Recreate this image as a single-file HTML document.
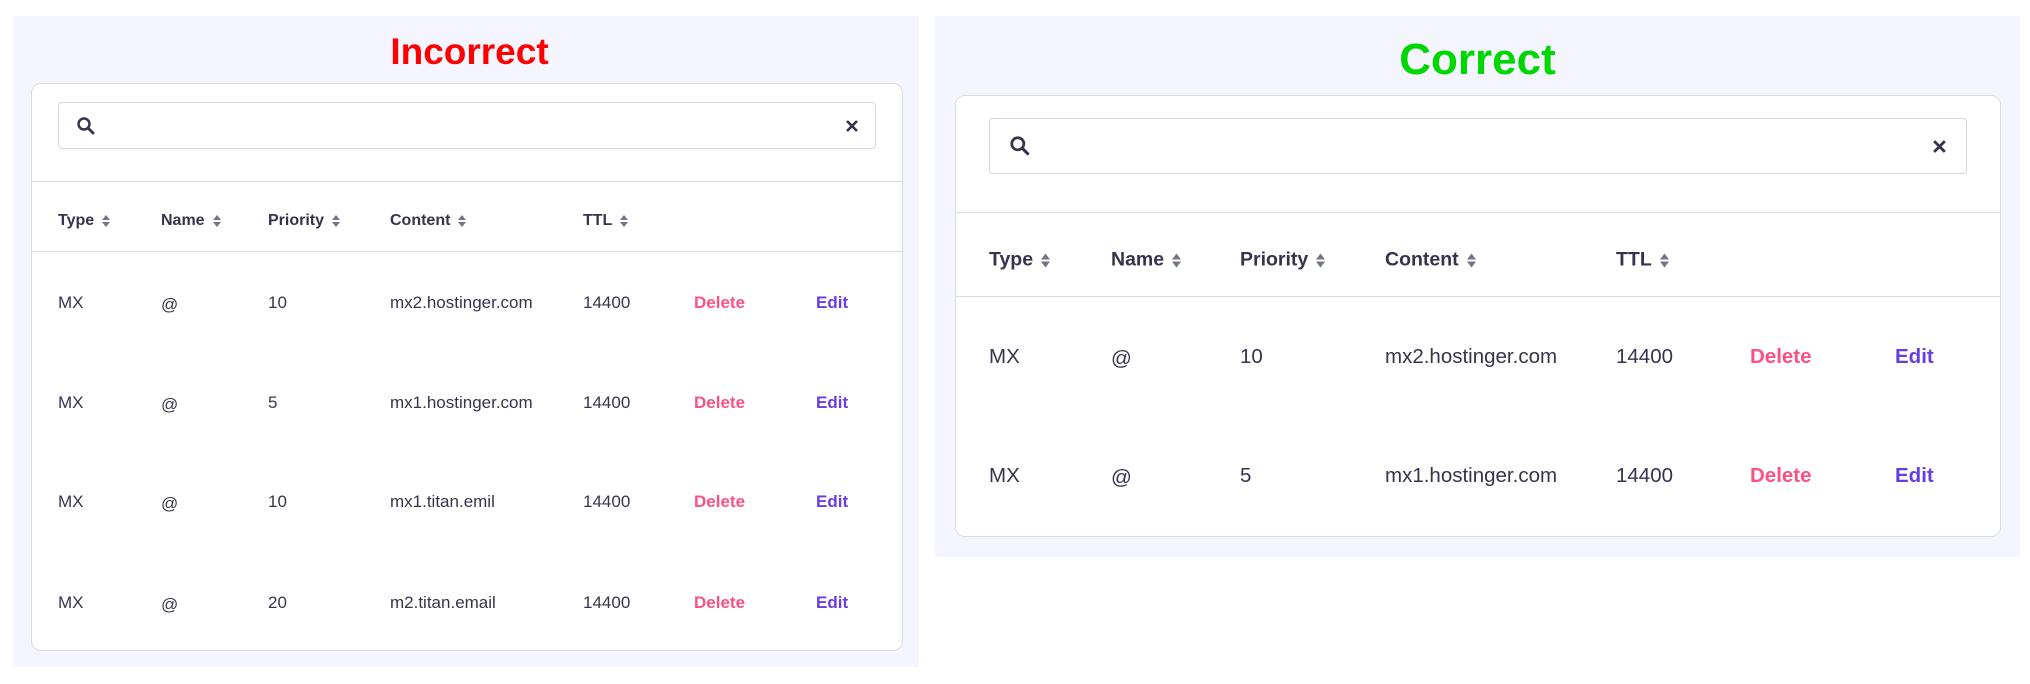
<!DOCTYPE html>
<html><head><meta charset="utf-8"><style>
body{margin:0;width:2030px;height:684px;background:#fff;position:relative;font-family:"Liberation Sans",sans-serif;color:#36344d;overflow:hidden}
.a{position:absolute}
.panel{position:absolute;background:#f4f5ff}
.card{position:absolute;background:#fff;border:1px solid #dadce0;border-radius:10px;box-sizing:border-box}
.search{position:absolute;border:1px solid #d5d7dd;border-radius:4px;box-sizing:border-box;background:#fff}
.hr{position:absolute;height:1px;background:#dadce0}
.t{position:absolute;white-space:nowrap;transform:translateY(-50%)}
.h{font-weight:bold}
.del{color:#fc5185;font-weight:bold}
.ed{color:#673de6;font-weight:bold}
.s{display:inline-block;vertical-align:middle;margin-left:8px}
</style></head><body>
<div class="panel" style="left:13px;top:16px;width:906px;height:651px"></div>
<div class="t" style="left:0;width:939px;text-align:center;top:52px;color:#f00;font-weight:bold;font-size:37px">Incorrect</div>
<div class="card" style="left:31px;top:83px;width:872px;height:568px"></div>
<div class="search" style="left:58px;top:102px;width:818px;height:47px"></div>
<svg class="a" style="left:76px;top:116px" width="20" height="20" viewBox="0 0 20 20"><circle cx="8" cy="8" r="5.5" fill="none" stroke="#36344d" stroke-width="2.5"/><path d="M12 12l5 5" stroke="#36344d" stroke-width="2.8" stroke-linecap="round"/></svg>
<svg class="a" style="left:845px;top:119px" width="14" height="14" viewBox="0 0 14 14"><path d="M2 2l10 10M12 2L2 12" stroke="#36344d" stroke-width="2.6"/></svg>
<div class="hr" style="left:32px;top:181px;width:870px"></div>
<div class="hr" style="left:32px;top:251px;width:870px"></div>
<div style="font-size:17px">
<div class="t h" style="left:58px;top:221px;font-size:16px">Type<svg class="s" width="8" height="12"><path d="M4 0L8 5H0zM4 12L8 7H0z" fill="#727586"/></svg></div>
<div class="t h" style="left:161px;top:221px;font-size:16px">Name<svg class="s" width="8" height="12"><path d="M4 0L8 5H0zM4 12L8 7H0z" fill="#727586"/></svg></div>
<div class="t h" style="left:268px;top:221px;font-size:16px">Priority<svg class="s" width="8" height="12"><path d="M4 0L8 5H0zM4 12L8 7H0z" fill="#727586"/></svg></div>
<div class="t h" style="left:390px;top:221px;font-size:16px">Content<svg class="s" width="8" height="12"><path d="M4 0L8 5H0zM4 12L8 7H0z" fill="#727586"/></svg></div>
<div class="t h" style="left:583px;top:221px;font-size:16px">TTL<svg class="s" width="8" height="12"><path d="M4 0L8 5H0zM4 12L8 7H0z" fill="#727586"/></svg></div>
<div class="t" style="left:58px;top:303px">MX</div><div class="t" style="left:161px;top:305px">@</div><div class="t" style="left:268px;top:303px">10</div><div class="t" style="left:390px;top:303px">mx2.hostinger.com</div><div class="t" style="left:583px;top:303px">14400</div><div class="t del" style="left:694px;top:303px">Delete</div><div class="t ed" style="left:816px;top:303px">Edit</div>
<div class="t" style="left:58px;top:403px">MX</div><div class="t" style="left:161px;top:405px">@</div><div class="t" style="left:268px;top:403px">5</div><div class="t" style="left:390px;top:403px">mx1.hostinger.com</div><div class="t" style="left:583px;top:403px">14400</div><div class="t del" style="left:694px;top:403px">Delete</div><div class="t ed" style="left:816px;top:403px">Edit</div>
<div class="t" style="left:58px;top:502px">MX</div><div class="t" style="left:161px;top:504px">@</div><div class="t" style="left:268px;top:502px">10</div><div class="t" style="left:390px;top:502px">mx1.titan.emil</div><div class="t" style="left:583px;top:502px">14400</div><div class="t del" style="left:694px;top:502px">Delete</div><div class="t ed" style="left:816px;top:502px">Edit</div>
<div class="t" style="left:58px;top:603px">MX</div><div class="t" style="left:161px;top:605px">@</div><div class="t" style="left:268px;top:603px">20</div><div class="t" style="left:390px;top:603px">m2.titan.email</div><div class="t" style="left:583px;top:603px">14400</div><div class="t del" style="left:694px;top:603px">Delete</div><div class="t ed" style="left:816px;top:603px">Edit</div>
</div>

<div class="panel" style="left:935px;top:16px;width:1085px;height:541px"></div>
<div class="t" style="left:935px;width:1085px;text-align:center;top:60px;color:#00d700;font-weight:bold;font-size:44px">Correct</div>
<div class="card" style="left:955px;top:95px;width:1046px;height:442px"></div>
<div class="search" style="left:989px;top:118px;width:978px;height:56px"></div>
<svg class="a" style="left:1009px;top:135px" width="22" height="22" viewBox="0 0 20 20"><circle cx="8" cy="8" r="5.5" fill="none" stroke="#36344d" stroke-width="2.5"/><path d="M12 12l5 5" stroke="#36344d" stroke-width="2.8" stroke-linecap="round"/></svg>
<svg class="a" style="left:1932px;top:139px" width="15" height="15" viewBox="0 0 14 14"><path d="M2 2l10 10M12 2L2 12" stroke="#36344d" stroke-width="2.6"/></svg>
<div class="hr" style="left:956px;top:212px;width:1044px"></div>
<div class="hr" style="left:956px;top:296px;width:1044px"></div>
<div style="font-size:20.5px">
<div class="t h" style="left:989px;top:260px;font-size:19.5px">Type<svg class="s" width="9" height="14"><path d="M4.5 0L9 6H0zM4.5 14L9 8H0z" fill="#727586"/></svg></div>
<div class="t h" style="left:1111px;top:260px;font-size:19.5px">Name<svg class="s" width="9" height="14"><path d="M4.5 0L9 6H0zM4.5 14L9 8H0z" fill="#727586"/></svg></div>
<div class="t h" style="left:1240px;top:260px;font-size:19.5px">Priority<svg class="s" width="9" height="14"><path d="M4.5 0L9 6H0zM4.5 14L9 8H0z" fill="#727586"/></svg></div>
<div class="t h" style="left:1385px;top:260px;font-size:19.5px">Content<svg class="s" width="9" height="14"><path d="M4.5 0L9 6H0zM4.5 14L9 8H0z" fill="#727586"/></svg></div>
<div class="t h" style="left:1616px;top:260px;font-size:19.5px">TTL<svg class="s" width="9" height="14"><path d="M4.5 0L9 6H0zM4.5 14L9 8H0z" fill="#727586"/></svg></div>
<div class="t" style="left:989px;top:357px">MX</div><div class="t" style="left:1111px;top:359px">@</div><div class="t" style="left:1240px;top:357px">10</div><div class="t" style="left:1385px;top:357px">mx2.hostinger.com</div><div class="t" style="left:1616px;top:357px">14400</div><div class="t del" style="left:1750px;top:357px">Delete</div><div class="t ed" style="left:1895px;top:357px">Edit</div>
<div class="t" style="left:989px;top:476px">MX</div><div class="t" style="left:1111px;top:478px">@</div><div class="t" style="left:1240px;top:476px">5</div><div class="t" style="left:1385px;top:476px">mx1.hostinger.com</div><div class="t" style="left:1616px;top:476px">14400</div><div class="t del" style="left:1750px;top:476px">Delete</div><div class="t ed" style="left:1895px;top:476px">Edit</div>
</div>
</body></html>
